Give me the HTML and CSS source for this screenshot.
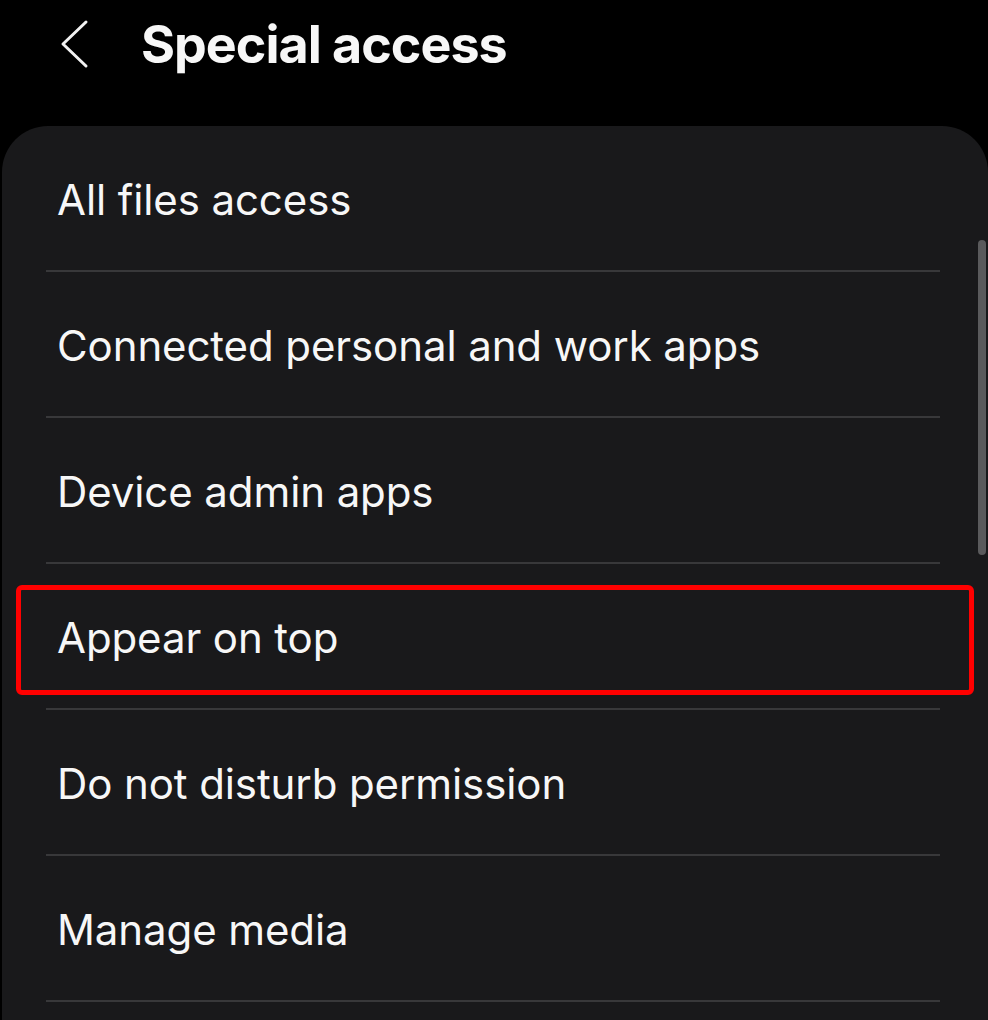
FILE: index.html
```html
<!DOCTYPE html>
<html lang="en">
<head>
<meta charset="utf-8">
<title>Special access</title>
<link rel="stylesheet" href="styles.css">
</head>
<body>
  <header class="appbar">
    <span class="back" aria-label="Back">
      <svg width="30" height="50" viewBox="0 0 30 50"><path d="M26 3 L3 25 L26 47" fill="none" stroke="#f2f2f2" stroke-width="3" stroke-linecap="round" stroke-linejoin="round"/></svg>
    </span>
    <h1 class="title">Special access</h1>
  </header>
  <main class="card">
    <div class="scrollbar"></div>
    <ul class="list">
      <li class="item"><span class="label">All files access</span></li>
      <li class="item"><span class="label">Connected personal and work apps</span></li>
      <li class="item"><span class="label">Device admin apps</span></li>
      <li class="item highlighted"><span class="label">Appear on top</span><span class="mark"></span></li>
      <li class="item"><span class="label">Do not disturb permission</span></li>
      <li class="item"><span class="label">Manage media</span></li>
    </ul>
  </main>
</body>
</html>
```
FILE: styles.css
```css
html, body {
  margin: 0;
  padding: 0;
  background: #000;
  height: 1020px;
  overflow: hidden;
}
body {
  font-family: Inter, "Liberation Sans", sans-serif;
  color: #f7f7f7;
}
.appbar {
  height: 126px;
  display: flex;
  align-items: flex-start;
  box-sizing: border-box;
  padding-left: 60px;
}
.back {
  display: block;
  width: 30px;
  height: 50px;
  margin-top: 19px;
}
.back svg { display: block; }
.title {
  margin: 0 0 0 51px;
  font-size: 52px;
  font-weight: 700;
  letter-spacing: -1px;
  line-height: 90px;
  color: #f7f7f7;
}
.card {
  position: relative;
  margin-left: 2px;
  background: #19191b;
  border-radius: 46px 46px 0 0;
  height: 894px;
}
.scrollbar {
  position: absolute;
  top: 114px;
  right: 2px;
  width: 8px;
  height: 315px;
  border-radius: 4px;
  background: #5a5a5c;
}
.list {
  list-style: none;
  margin: 0;
  padding: 0;
}
.item {
  position: relative;
  height: 146px;
  display: flex;
  align-items: center;
  padding-left: 55px;
  box-sizing: border-box;
}
.item::after {
  content: "";
  position: absolute;
  left: 44px;
  right: 48px;
  bottom: 0;
  height: 2px;
  background: #38383a;
}
.label {
  font-size: 42px;
  font-weight: 400;
  letter-spacing: -0.1px;
}
.mark {
  position: absolute;
  top: 21px;
  bottom: 15px;
  left: 14px;
  right: 14px;
  border: 5px solid #ff0000;
  border-radius: 6px;
}
```
